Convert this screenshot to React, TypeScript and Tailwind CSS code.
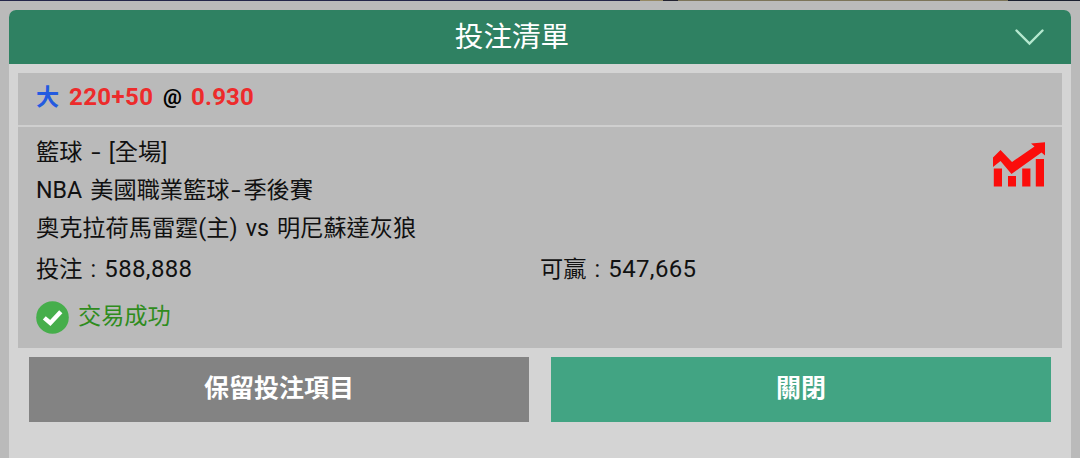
import React from 'react';

interface Bet {
  pick: string;
  line: string;
  odds: string;
  stake: string;
  win: string;
}

const bet: Bet = {
  pick: '大',
  line: '220+50',
  odds: '0.930',
  stake: '588,888',
  win: '547,665',
};

// 走勢圖示
const TrendIcon: React.FC = () => (
  <svg width="54" height="46" viewBox="0 0 54 46" fill="#fb0d0b">
    <path d="M1 16.5 L8.5 9 L20 21 L42.5 5.5 L39 2.5 L53 1.3 L53 14.5 L49.5 11.5 L19.5 33 L8.5 20 L1 26 Z" />
    <rect x="1.8" y="27.5" width="8.2" height="18" />
    <rect x="16" y="35" width="8" height="10.5" />
    <rect x="30.2" y="27.5" width="8.2" height="18" />
    <rect x="43.8" y="18" width="8.2" height="27.5" />
  </svg>
);

// 交易成功圖示
const SuccessIcon: React.FC = () => (
  <svg width="33" height="33" viewBox="0 0 33 33">
    <circle cx="16.5" cy="16.5" r="16.3" fill="#46ae4b" />
    <path d="M8.3 16.8 L14.3 22 L24.8 10.8" fill="none" stroke="#fff" strokeWidth="4.4" />
  </svg>
);

// 加寬的連字號
const Dash: React.FC = () => (
  <span className="inline-block w-[10px] scale-x-[1.45] text-center">-</span>
);

const Header: React.FC = () => (
  <div className="flex h-[54px] items-center rounded-t-[7px] bg-[#2f8162] pr-[27px]">
    <h1 className="flex-1 text-center text-[28.6px] leading-[54px] text-white">投注清單</h1>
    <svg width="29" height="17" viewBox="0 0 29 17" fill="none">
      <path d="M1.5 1.5 L14.5 14.5 L27.5 1.5" stroke="#b5e8cf" strokeWidth="2.4" strokeLinecap="round" />
    </svg>
  </div>
);

const BetCard: React.FC<{ bet: Bet }> = ({ bet }) => (
  <div className="mx-[9px] mt-[9px] h-[275px] bg-[#bababa] text-[23.2px]">
    <div className="flex h-[54px] border-b-2 border-[#cfcfcf] pl-[18px] font-bold leading-[49px] text-[#ed2b2b]">
      <span className="w-[33px] text-[#235ae0]">{bet.pick}</span>
      <span className="w-[94px] text-[24px] tracking-[0.4px]">{bet.line}</span>
      <span className="w-[28px] text-[21px] text-black">@</span>
      <span className="text-[24px] tracking-[0.2px]">{bet.odds}</span>
    </div>
    <div className="flex justify-between pl-[18px] pr-[16px] pt-[6px] text-[#111]">
      <div className="leading-[38px] [word-spacing:2.4px]">
        <p>籃球 <Dash /> [全場]</p>
        <p>
          NBA 美國職業籃球<span className="px-[2px]"><Dash /></span>季後賽
        </p>
        <p>奧克拉荷馬雷霆(主) vs 明尼蘇達灰狼</p>
      </div>
      <div className="pt-[8px]">
        <TrendIcon />
      </div>
    </div>
    <div className="flex pl-[18px] leading-[45px] text-[#111] [word-spacing:2.4px]">
      <p className="w-[504px]">投注 : <span className="text-[24px] tracking-[0.35px]">{bet.stake}</span></p>
      <p>可贏 : <span className="text-[24px] tracking-[0.35px]">{bet.win}</span></p>
    </div>
    <div className="flex gap-[9px] pl-[18px] pt-[9px] leading-[30px] text-[#2f8c1d]">
      <SuccessIcon />
      <span>交易成功</span>
    </div>
  </div>
);

const App: React.FC = () => {
  return (
    <div className="h-[458px] overflow-hidden bg-[#bababa] font-[Roboto,'Noto_Sans_CJK_TC',sans-serif]">
      {/* 背後頁面露出的邊緣 */}
      <div className="flex h-px">
        <div className="w-[640px] bg-[#23264a]" />
        <div className="w-[23px] bg-[#958863]" />
        <div className="w-[15px] bg-[#222230]" />
        <div className="w-[330px] bg-[#7c7459]" />
        <div className="flex-1 bg-[#1b2030]" />
      </div>
      <div className="mx-[9px] mt-[9px] h-[448px] rounded-t-[7px] bg-[#d4d4d4]">
        <Header />
        <BetCard bet={bet} />
        <div className="flex gap-[22px] px-5 pt-[9px] text-[25px] font-bold text-white">
          <button className="h-[65px] w-[500px] bg-[#838383] pb-px">保留投注項目</button>
          <button className="h-[65px] w-[500px] bg-[#42a483] pb-px">關閉</button>
        </div>
      </div>
    </div>
  );
};

export default App;
